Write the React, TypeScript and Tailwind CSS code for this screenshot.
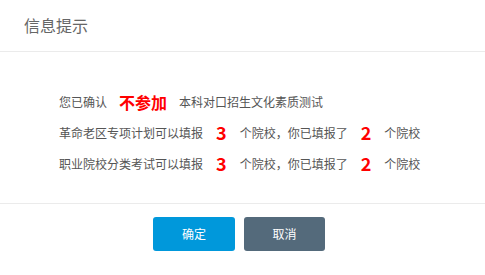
import React from 'react';

const font = { fontFamily: '"Noto Sans CJK SC", "Noto Sans", sans-serif' };

const Num: React.FC<{ children: React.ReactNode }> = ({ children }) => (
    <span className="mx-[13px] text-[18px] font-bold text-[#ff0000]">{children}</span>
);

export default function App() {
    return (
        <div className="w-[485px] h-[275px] bg-white flex flex-col" style={font}>
            {/* header */}
            <div className="h-[52px] px-6 pb-[2px] flex items-center border-b border-[#ebebeb]">
                <span className="text-[16px] text-[#666]">信息提示</span>
            </div>

            {/* body */}
            <div className="h-[151px] pt-[34px] pl-[59px] text-[12px] text-[#555]">
                <div className="h-[31px] flex items-center">
                    您已确认
                    <span className="mx-[12px] text-[16px] font-bold text-[#ff0000]">不参加</span>
                    本科对口招生文化素质测试
                </div>
                <div className="h-[31px] flex items-center">
                    革命老区专项计划可以填报<Num>3</Num>个院校，你已填报了<Num>2</Num>个院校
                </div>
                <div className="h-[31px] flex items-center">
                    职业院校分类考试可以填报<Num>3</Num>个院校，你已填报了<Num>2</Num>个院校
                </div>
            </div>

            {/* footer */}
            <div className="border-t border-[#ebebeb] pt-[13px] pr-[7px] flex justify-center gap-[9px]">
                <button className="w-[82px] h-[34px] rounded-[3px] bg-[#0098db] text-white text-[12px]">确定</button>
                <button className="w-[81px] h-[34px] rounded-[3px] bg-[#546a7b] text-white text-[12px]">取消</button>
            </div>
        </div>
    );
}
